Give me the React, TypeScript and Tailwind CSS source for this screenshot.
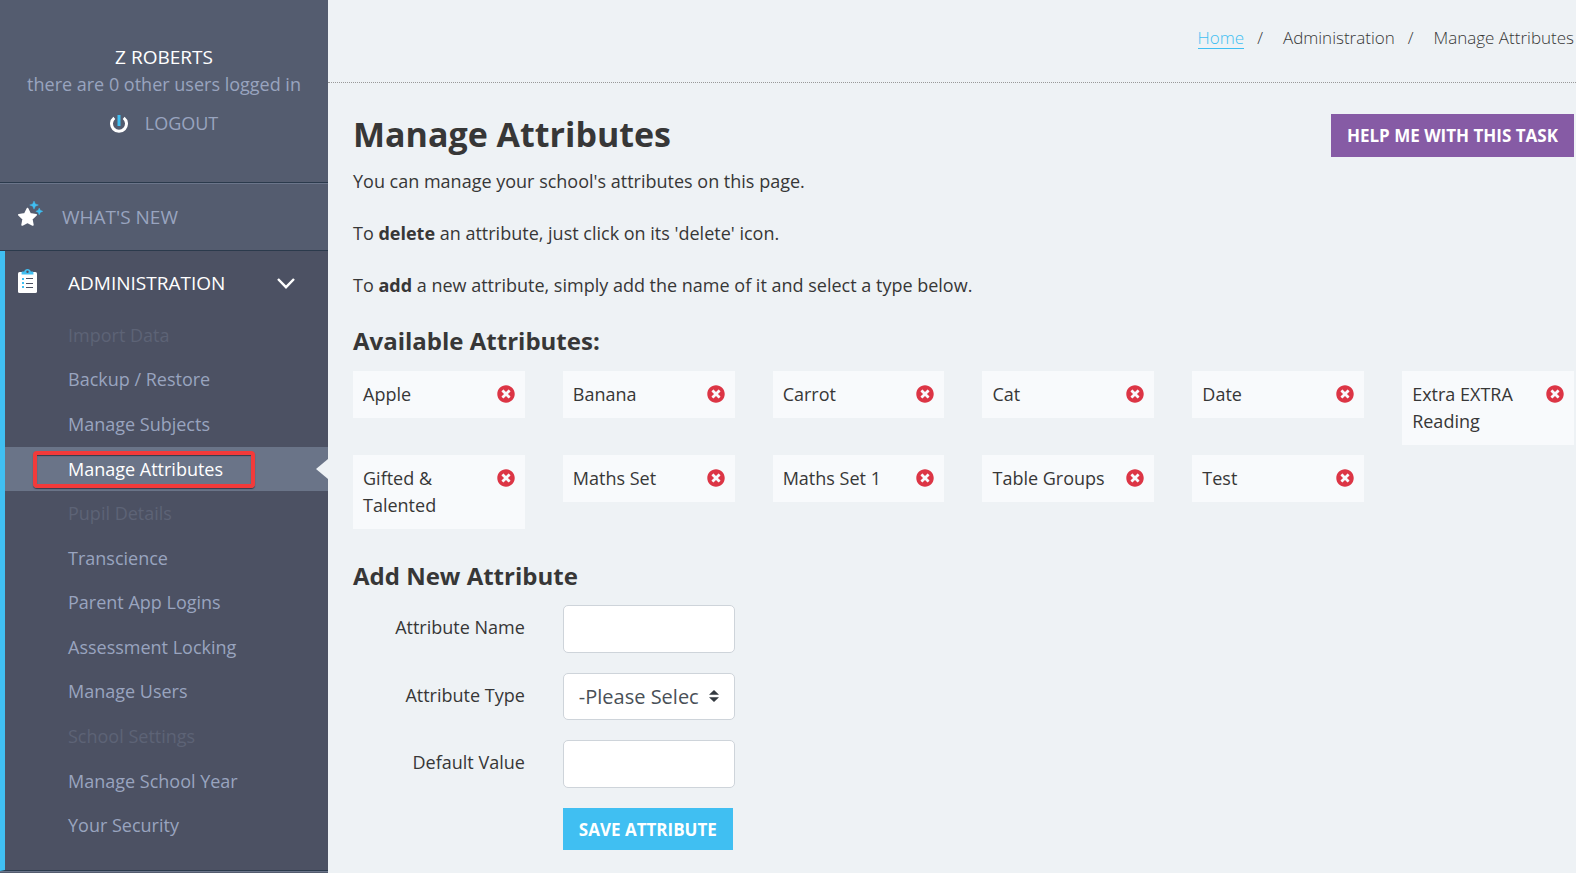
import { useState } from "react";
import { clsx } from "clsx";
import { FaTimesCircle } from "react-icons/fa";

const menuItems = [
  { label: "Import Data", heading: true },
  { label: "Backup / Restore" },
  { label: "Manage Subjects" },
  { label: "Manage Attributes" },
  { label: "Pupil Details", heading: true },
  { label: "Transcience" },
  { label: "Parent App Logins" },
  { label: "Assessment Locking" },
  { label: "Manage Users" },
  { label: "School Settings", heading: true },
  { label: "Manage School Year" },
  { label: "Your Security" },
];

const initialAttributes = [
  "Apple",
  "Banana",
  "Carrot",
  "Cat",
  "Date",
  "Extra EXTRA Reading",
  "Gifted & Talented",
  "Maths Set",
  "Maths Set 1",
  "Table Groups",
  "Test",
];

const PowerIcon = () => (
  <svg width="18" height="18" viewBox="0 0 18 18" fill="none" aria-hidden="true">
    <path d="M4.3 2.9A7.500 7.500 0 1 0 13.700 2.9" stroke="#fff" strokeWidth="3" />
    <path d="M9 0v11" stroke="#40bff2" strokeWidth="3" />
  </svg>
);

const StarIcon = () => (
  <svg width="25" height="25" viewBox="0 0 25 25" aria-hidden="true">
    <path
      d="M9.5 7.6l2.6 5.400 6 .8-4.400 4.200 1.100 5.900-5.300-2.800-5.300 2.800 1.100-5.900L.9 13.800l6-.8z"
      fill="#fff"
      stroke="#fff"
      strokeWidth="1.8"
      strokeLinejoin="round"
    />
    <path
      d="M16 0l1.4 2.9 3 1.1-3 1.2L16 8.2l-1.3-3-3-1.2 3-1.1zM21.2 7l1.1 2.3 2.5 1-2.5 1.1-1.1 2.5-1-2.5-2.4-1.1 2.4-1z"
      fill="#40bff2"
      stroke="#40bff2"
      strokeWidth=".4"
    />
  </svg>
);

const ClipboardIcon = () => (
  <svg width="19" height="24" viewBox="0 0 19 24" aria-hidden="true">
    <rect y="3" width="19" height="21" rx="1.6" fill="#fff" />
    <path
      d="M3.600 5.600V3.400c0-.7.5-1 1.200-1h1.400C6.500.9 7.800 0 9.500 0s3 .9 3.300 2.400h1.400c.7 0 1.200.3 1.200 1v2.200z"
      fill="#40bff2"
    />
    <circle cx="9.500" cy="2.800" r="1.200" fill="#4c5163" />
    <path d="M4 9h2v2H4zM4 13h2v2H4zM4 17h2v2H4z" fill="#40bff2" />
    <path d="M8 9.500h7M8 14.500h7M8 18.500h7" stroke="#4c5163" />
  </svg>
);

const ChevronIcon = () => (
  <svg width="18" height="11" viewBox="0 0 18 11" fill="none" aria-hidden="true">
    <path d="M1 1l8 8.200L17 1" stroke="#fff" strokeWidth="2.400" />
  </svg>
);

const Sidebar = () => {
  const [active, setActive] = useState("Manage Attributes");

  return (
    <aside className="flex w-[328px] shrink-0 flex-col bg-[#545c6f] text-[18px] leading-[27px] text-[#99a4bf]">
      <div className="flex flex-col items-center border-b border-[#2b3a4c] pt-11 pb-[45px]">
        <span className="text-[19px] text-white">Z ROBERTS</span>
        <span>there are 0 other users logged in</span>
        <a href="#logout" className="mt-3 flex items-center gap-[17px]">
          <PowerIcon />
          LOGOUT
        </a>
      </div>

      <nav>
        <a
          href="#whats-new"
          className="flex h-[68px] items-center gap-[19px] border-t border-b border-t-[#6b758a] border-b-[#2b3a4c] pl-[18px] text-[19px]"
        >
          <span className="mb-2">
            <StarIcon />
          </span>
          WHAT'S NEW
        </a>

        <div className="border-b border-l-[5px] border-b-[#2b3a4c] border-l-[#40bff2] bg-[#4c5163] pb-[22px]">
          <button
            type="button"
            className="flex w-full items-center pt-[18px] pr-[33px] pb-4 pl-[13px] text-[19px] text-white"
          >
            <span className="mb-1">
              <ClipboardIcon />
            </span>
            <span className="ml-[31px] flex-1 text-left">ADMINISTRATION</span>
            <ChevronIcon />
          </button>

          <ul className="grid min-h-[535px] auto-rows-fr">
            {menuItems.map((item) => (
              <li
                key={item.label}
                className={clsx(
                  "relative flex items-center",
                  item.label === active && "bg-[#6a7488]"
                )}
              >
                {item.heading ? (
                  <span className="pl-[63px] text-[#5d6376]">{item.label}</span>
                ) : (
                  <a
                    href="#menu"
                    onClick={() => setActive(item.label)}
                    className={clsx(
                      "w-full pl-[63px]",
                      item.label === active && "text-white"
                    )}
                  >
                    {item.label}
                  </a>
                )}
                {item.label === active && (
                  <>
                    <span className="pointer-events-none absolute top-1 left-7 h-[37px] w-[222px] rounded border-4 border-[#f23a3a] shadow-[0_1px_1px_#333a4a,inset_0_1px_1px_#333a4a]" />
                    <svg
                      width="12"
                      height="20"
                      viewBox="0 0 12 20"
                      className="absolute right-0"
                      aria-hidden="true"
                    >
                      <path d="M12 0v20L0 10z" fill="#eef2f5" />
                    </svg>
                  </>
                )}
              </li>
            ))}
          </ul>
        </div>
        <div className="border-t border-[#6b758a]" />
      </nav>
    </aside>
  );
};

const Breadcrumbs = () => (
  <nav className="flex justify-end border-b border-dotted border-[#999] pt-6 pr-[2px] pb-[31px] text-[17px] leading-[27px] font-light">
    <a href="#home" className="h-[25px] border-b border-[#40bff2] text-[#40bff2]">
      Home
    </a>
    <span className="mr-5 ml-[13px]">/</span>
    <span>Administration</span>
    <span className="mr-5 ml-[13px]">/</span>
    <span>Manage Attributes</span>
  </nav>
);

export default function App() {
  const [attributes, setAttributes] = useState(initialAttributes);
  const [name, setName] = useState("");

  const handleDelete = (attribute: string) =>
    setAttributes(attributes.filter((a) => a !== attribute));

  const handleSave = () => {
    if (!name) return;
    setAttributes([...attributes, name]);
    setName("");
  };

  return (
    <div className="flex min-h-screen bg-[#eef2f5] font-['Open_Sans',sans-serif]">
      <Sidebar />

      <div className="min-w-0 flex-1 text-[18px] leading-[27px] text-[#373737]">
        <Breadcrumbs />

        <main className="pt-[31px] pr-[2px] pl-[25px]">
          <div className="flex items-start justify-between">
            <h1 className="text-[34px] leading-[41px] font-bold">Manage Attributes</h1>
            <button
              type="button"
              className="h-[43px] bg-[#865ba5] px-4 text-[17px] font-bold text-white"
            >
              HELP ME WITH THIS TASK
            </button>
          </div>

          <div className="mt-[11px] flex flex-col gap-[25px]">
            <p>You can manage your school's attributes on this page.</p>
            <p>
              To <b className="font-bold">delete</b> an attribute, just click on its
              'delete' icon.
            </p>
            <p>
              To <b className="font-bold">add</b> a new attribute, simply add the name of
              it and select a type below.
            </p>
          </div>

          <h2 className="mt-[27px] text-[24px] leading-[29px] font-bold">
            Available Attributes:
          </h2>
          <ul className="mt-4 grid grid-cols-6 items-start gap-x-[38px] gap-y-[10px]">
            {attributes.map((attribute) => (
              <li
                key={attribute}
                className="flex items-start justify-between bg-[#f8fafc] p-[10px]"
              >
                <span>{attribute}</span>
                <button
                  type="button"
                  aria-label={`Delete ${attribute}`}
                  onClick={() => handleDelete(attribute)}
                  className="mt-1 shrink-0 text-[#dc3545]"
                >
                  <FaTimesCircle size={18} />
                </button>
              </li>
            ))}
          </ul>

          <h2 className="mt-8 text-[24px] leading-[29px] font-bold">Add New Attribute</h2>
          <form
            className="mt-[15px] grid grid-cols-6 gap-x-[38px] gap-y-5"
            onSubmit={(e) => e.preventDefault()}
          >
            <label htmlFor="attribute-name" className="pt-[9px] text-right">
              Attribute Name
            </label>
            <input
              id="attribute-name"
              value={name}
              onChange={(e) => setName(e.target.value)}
              className="h-12 w-full rounded-[5px] border border-[#ced4da] bg-white px-[15px]"
            />

            <label htmlFor="attribute-type" className="col-start-1 pt-[9px] text-right">
              Attribute Type
            </label>
            <div className="relative">
              <select
                id="attribute-type"
                className="block h-[47px] w-full appearance-none rounded-[5px] border border-[#ced4da] bg-white pr-[35px] pl-[15px] text-[20px] text-[#495057]"
              >
                <option>-Please Select-</option>
                <option>Text</option>
                <option>Yes / No</option>
              </select>
              <svg
                width="10"
                height="12"
                viewBox="0 0 4 5"
                preserveAspectRatio="none"
                className="pointer-events-none absolute top-[17px] right-4"
                aria-hidden="true"
              >
                <path fill="#343a40" d="M2 0L0 2h4zm0 5L0 3h4z" />
              </svg>
            </div>

            <label htmlFor="default-value" className="col-start-1 pt-[9px] text-right">
              Default Value
            </label>
            <input
              id="default-value"
              className="h-12 w-full rounded-[5px] border border-[#ced4da] bg-white px-[15px]"
            />

            <div className="col-start-2">
              <button
                type="submit"
                onClick={handleSave}
                className="h-[42px] bg-[#40bff2] px-4 text-[17px] font-bold whitespace-nowrap text-white"
              >
                SAVE ATTRIBUTE
              </button>
            </div>
          </form>
        </main>
      </div>
    </div>
  );
}
